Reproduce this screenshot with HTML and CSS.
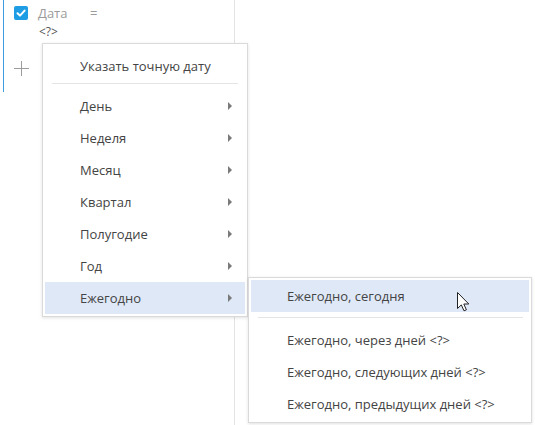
FILE: index.html
```html
<!DOCTYPE html>
<html lang="ru">
<head>
<meta charset="utf-8">
<link rel="stylesheet" href="styles.css">
</head>
<body>
<div class="page">
  <div class="column">
    <div class="filter">
      <div class="filter-row">
        <span class="checkbox">
          <svg width="14" height="14" viewBox="0 0 14 14"><path d="M3.5 7.2 L6 9.6 L10.6 4.6" fill="none" stroke="#fff" stroke-width="2" stroke-linecap="round" stroke-linejoin="round"/></svg>
        </span>
        <span class="field">Дата</span>
        <span class="op">=</span>
      </div>
      <div class="value">&lt;?&gt;</div>
      <div class="add">
        <svg width="15" height="15" viewBox="0 0 15 15"><path d="M7.5 0 V15 M0 7.5 H15" stroke="#9c9c9c" stroke-width="1"/></svg>
      </div>
    </div>
  </div>

  <div class="menu main-menu">
    <div class="item first">Указать точную дату</div>
    <div class="sep"></div>
    <div class="item sub">День<span class="arrow"></span></div>
    <div class="item sub">Неделя<span class="arrow"></span></div>
    <div class="item sub">Месяц<span class="arrow"></span></div>
    <div class="item sub">Квартал<span class="arrow"></span></div>
    <div class="item sub">Полугодие<span class="arrow"></span></div>
    <div class="item sub">Год<span class="arrow"></span></div>
    <div class="item sub active">Ежегодно<span class="arrow"></span></div>
  </div>

  <div class="menu sub-menu">
    <div class="item active">Ежегодно, сегодня</div>
    <div class="sep"></div>
    <div class="item">Ежегодно, через дней &lt;?&gt;</div>
    <div class="item">Ежегодно, следующих дней &lt;?&gt;</div>
    <div class="item">Ежегодно, предыдущих дней &lt;?&gt;</div>
  </div>

  <svg class="cursor" width="13" height="20" viewBox="0 0 13 20">
    <path d="M0.5 0.5 L0.5 16.5 L4.3 12.9 L7 18.8 L9.4 17.8 L6.8 12 L11.8 12 Z" fill="#fff" stroke="#222" stroke-width="1" stroke-linejoin="miter"/>
  </svg>
</div>
</body>
</html>
```

FILE: styles.css
```css
* { box-sizing: border-box; }

html, body {
  margin: 0;
  padding: 0;
  background: #fff;
}

body {
  font-family: "Open Sans", "Liberation Sans", sans-serif;
  font-size: 13px;
  color: #444;
}

.page {
  position: relative;
  width: 535px;
  height: 425px;
  overflow: hidden;
}

.column {
  width: 235px;
  height: 425px;
  border-right: 1px solid #e2e2e2;
  padding-left: 3px;
}

.filter {
  border-left: 1px solid #3f9ddf;
  height: 92px;
  padding-left: 10px;
  padding-top: 6px;
}

.filter-row {
  display: flex;
  align-items: center;
  height: 14px;
}

.checkbox {
  width: 14px;
  height: 14px;
  border-radius: 2px;
  background: #1e9de4;
  display: flex;
}

.field {
  margin-left: 10px;
  color: #9b9b9b;
  font-size: 13px;
  width: 52px;
}

.op {
  color: #9b9b9b;
  font-size: 13px;
}

.value {
  margin-left: 25px;
  margin-top: 5px;
  font-size: 12px;
  color: #555;
  line-height: 14px;
}

.add {
  margin-top: 22px;
  margin-left: -0.5px;
  width: 15px;
  height: 15px;
  display: flex;
}

.menu {
  position: absolute;
  background: #fff;
  border: 1px solid #dadada;
  box-shadow: 0 1px 3px rgba(0, 0, 0, 0.12);
  padding: 2px;
}

.main-menu {
  left: 42px;
  top: 43px;
  width: 206px;
  height: 274px;
}

.sub-menu {
  left: 248px;
  top: 277px;
  width: 284px;
  height: 146px;
}

.item {
  height: 32px;
  display: flex;
  align-items: center;
  position: relative;
  color: #444;
  white-space: nowrap;
}

.main-menu .item {
  padding-left: 35px;
}

.main-menu .item.first {
  margin-top: 4px;
}

.sub-menu .item {
  padding-left: 36px;
}

.item.active {
  background: #dfe8f7;
}

.sep {
  height: 1px;
  background: #e4e4e4;
}

.main-menu .sep {
  margin: 1px 7px 6px 7px;
}

.sub-menu .sep {
  margin: 5px 6px 6px 7px;
}

.arrow {
  position: absolute;
  left: 183px;
  top: 12px;
  width: 0;
  height: 0;
  border-top: 4px solid transparent;
  border-bottom: 4px solid transparent;
  border-left: 4px solid #7a7a7a;
}

.cursor {
  position: absolute;
  left: 457px;
  top: 292px;
}
```
